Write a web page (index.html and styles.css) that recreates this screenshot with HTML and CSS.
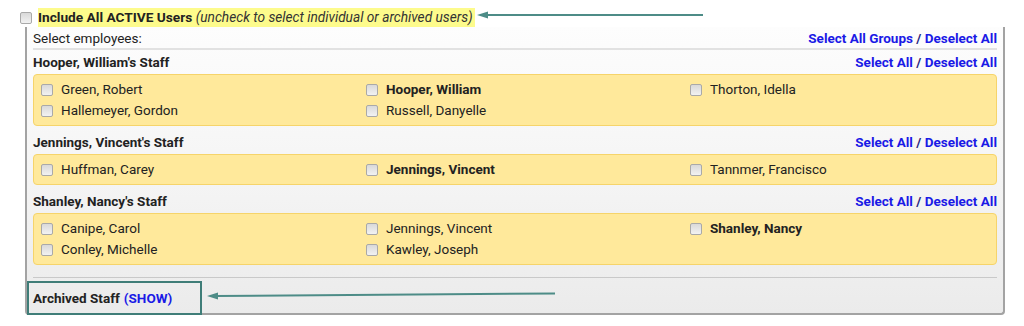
FILE: index.html
```html
<!DOCTYPE html>
<html lang="en">
<head>
    <meta charset="UTF-8">
    <meta name="viewport" content="width=device-width, initial-scale=1.0">
    <title>Select Employees</title>
    <link rel="stylesheet" href="styles.css">
</head>
<body>
    <div class="page">
        <div class="top-row">
            <label class="include-all">
                <input type="checkbox" class="box">
                <span class="highlight"><b>Include All ACTIVE Users</b> <i>(uncheck to select individual or archived users)</i></span>
            </label>
        </div>

        <div class="panel">
            <div class="panel-head">
                <span>Select employees:</span>
                <span class="links"><a href="#">Select All Groups</a> <span class="sep">/</span> <a href="#">Deselect All</a></span>
            </div>

            <div class="group">
                <div class="group-head">
                    <span class="group-title">Hooper, William's Staff</span>
                    <span class="links"><a href="#">Select All</a> <span class="sep">/</span> <a href="#">Deselect All</a></span>
                </div>
                <div class="staff-box">
                    <label class="person"><input type="checkbox" class="box"> Green, Robert</label>
                    <label class="person lead"><input type="checkbox" class="box"> Hooper, William</label>
                    <label class="person"><input type="checkbox" class="box"> Thorton, Idella</label>
                    <label class="person"><input type="checkbox" class="box"> Hallemeyer, Gordon</label>
                    <label class="person"><input type="checkbox" class="box"> Russell, Danyelle</label>
                </div>
            </div>

            <div class="group">
                <div class="group-head">
                    <span class="group-title">Jennings, Vincent's Staff</span>
                    <span class="links"><a href="#">Select All</a> <span class="sep">/</span> <a href="#">Deselect All</a></span>
                </div>
                <div class="staff-box">
                    <label class="person"><input type="checkbox" class="box"> Huffman, Carey</label>
                    <label class="person lead"><input type="checkbox" class="box"> Jennings, Vincent</label>
                    <label class="person"><input type="checkbox" class="box"> Tannmer, Francisco</label>
                </div>
            </div>

            <div class="group">
                <div class="group-head">
                    <span class="group-title">Shanley, Nancy's Staff</span>
                    <span class="links"><a href="#">Select All</a> <span class="sep">/</span> <a href="#">Deselect All</a></span>
                </div>
                <div class="staff-box">
                    <label class="person"><input type="checkbox" class="box"> Canipe, Carol</label>
                    <label class="person"><input type="checkbox" class="box"> Jennings, Vincent</label>
                    <label class="person lead"><input type="checkbox" class="box"> Shanley, Nancy</label>
                    <label class="person"><input type="checkbox" class="box"> Conley, Michelle</label>
                    <label class="person"><input type="checkbox" class="box"> Kawley, Joseph</label>
                </div>
            </div>

            <div class="divider"></div>

            <div class="archived">
                <b>Archived Staff</b> <a href="#">(SHOW)</a>
            </div>
        </div>

        <!-- annotation arrows -->
        <svg class="arrow arrow-top" width="240" height="12" viewBox="0 0 240 12">
            <line x1="8" y1="6" x2="226" y2="6" stroke="#4d8c87" stroke-width="2"/>
            <polygon points="0,6 11,2.5 11,9.5" fill="#4d8c87"/>
        </svg>
        <svg class="arrow arrow-bottom" width="360" height="12" viewBox="0 0 360 12">
            <line x1="8" y1="7" x2="348" y2="4.5" stroke="#4d8c87" stroke-width="2"/>
            <polygon points="0,7 11,3.5 11,10.5" fill="#4d8c87"/>
        </svg>
    </div>
</body>
</html>
```

FILE: styles.css
```css
* {
    margin: 0;
    padding: 0;
    box-sizing: border-box;
}

body {
    font-family: Roboto, "Liberation Sans", sans-serif;
    font-size: 13.5px;
    color: #222;
    background: #fff;
}

.page {
    position: relative;
    width: 1024px;
    height: 326px;
}

.box {
    appearance: none;
    -webkit-appearance: none;
    width: 12px;
    height: 12px;
    border: 1px solid #a9a9a9;
    border-radius: 2px;
    background: linear-gradient(#d9d9d9, #f2f2f2);
    flex-shrink: 0;
}

.top-row {
    height: 27px;
    padding: 8px 0 0 20px;
}

.include-all {
    display: flex;
    align-items: center;
    gap: 6px;
}

.highlight {
    background: #fdfb8c;
    padding: 1px 2px 2px 0;
    font-size: 13.7px;
    line-height: 16px;
}

.highlight i {
    color: #333;
}

.panel {
    margin-left: 25px;
    width: 980px;
    border: 2px solid #a3a3a3;
    border-top: none;
    border-radius: 0 0 4px 4px;
    padding: 0 6px;
    background: linear-gradient(#fdfdfd 0%, #f5f5f5 50%, #ebebeb 100%);
}

.panel-head,
.group-head {
    display: flex;
    justify-content: space-between;
    align-items: center;
}

.panel-head {
    height: 23px;
    border-bottom: 2px solid #e2e2e2;
}

.group-head {
    height: 24px;
}

.group-title {
    font-weight: bold;
}

.links a {
    color: #1a1ae6;
    font-weight: bold;
    text-decoration: none;
}

.links .sep {
    color: #262680;
    font-weight: bold;
}

.group {
    margin-bottom: 4px;
}

.staff-box {
    display: grid;
    grid-template-columns: 325px 324px 1fr;
    background: #ffe99b;
    border: 1px solid #f6d46a;
    border-radius: 4px;
    padding: 4px 7px;
}

.person {
    display: flex;
    align-items: center;
    gap: 8px;
    line-height: 21px;
}

.person.lead {
    font-weight: bold;
}

.divider {
    margin-top: 12px;
    border-top: 1px solid #c9c9c9;
}

.archived {
    margin: 3px 0 -2px -6px;
    width: 175px;
    height: 34px;
    border: 2px solid #3f7d78;
    padding-left: 4px;
    display: flex;
    align-items: center;
    gap: 4px;
}

.archived a {
    color: #1a1ae6;
    font-weight: bold;
    text-decoration: none;
}

.arrow {
    position: absolute;
}

.arrow-top {
    left: 477px;
    top: 9px;
}

.arrow-bottom {
    left: 207px;
    top: 289px;
}
```
